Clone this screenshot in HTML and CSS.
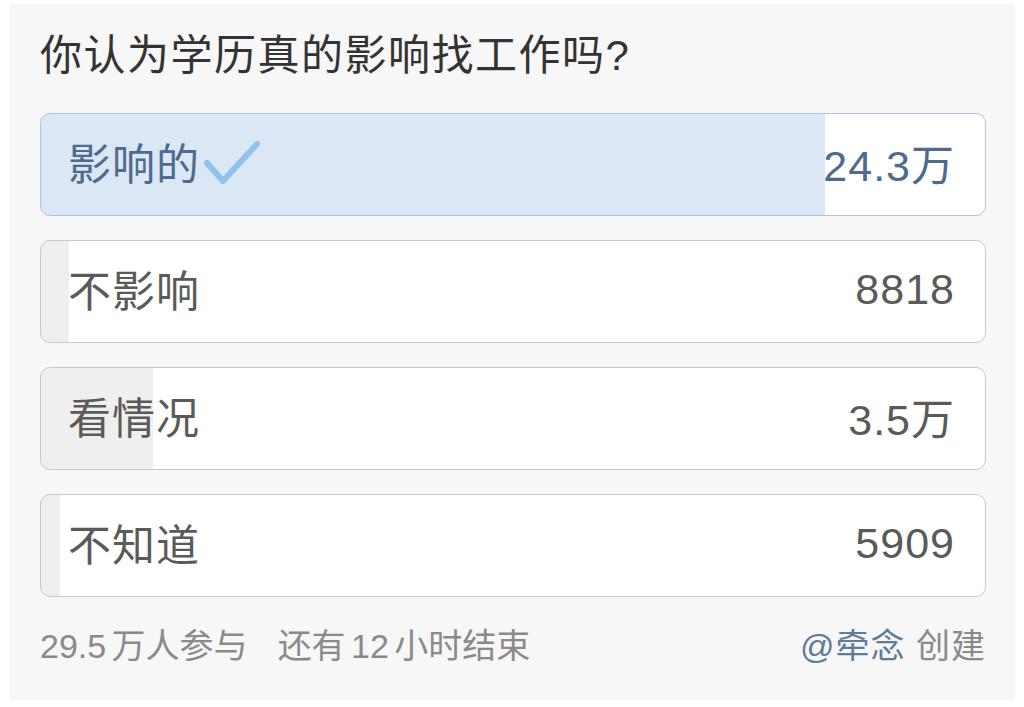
FILE: index.html
```html
<!DOCTYPE html>
<html lang="zh-CN">
<head>
<meta charset="utf-8">
<title>投票</title>
<link rel="stylesheet" href="styles.css">
</head>
<body>
<div class="card">
  <h1 class="title">你认为学历真的影响找工作吗?</h1>
  <div class="options">
    <div class="option selected" style="--p:83%">
      <span class="label">影响的<svg class="check" viewBox="0 0 58 44" width="58" height="44"><path d="M4 22 L20 40 L54 3" fill="none" stroke="#8fc2ef" stroke-width="6" stroke-linecap="round" stroke-linejoin="round"/></svg></span>
      <span class="count">24.3万</span>
    </div>
    <div class="option" style="--p:3%">
      <span class="label">不影响</span>
      <span class="count">8818</span>
    </div>
    <div class="option" style="--p:11.9%">
      <span class="label">看情况</span>
      <span class="count">3.5万</span>
    </div>
    <div class="option" style="--p:2%">
      <span class="label">不知道</span>
      <span class="count">5909</span>
    </div>
  </div>
  <div class="footer">
    <span class="stats">29.5 万人参与<span class="gap"></span>还有 12 小时结束</span>
    <span class="creator"><span class="user">@牵念</span> 创建</span>
  </div>
</div>
</body>
</html>
```

FILE: styles.css
```css
html, body {
  margin: 0;
  padding: 0;
  background: #ffffff;
}
body {
  font-family: "Liberation Sans", "Noto Sans CJK SC", sans-serif;
  padding: 4px 9px 7px 10px;
}
.card {
  background: #f7f7f7;
  height: 696px;
  box-sizing: border-box;
  padding: 25px 29px 0 30px;
  display: flex;
  flex-direction: column;
}
.title {
  margin: 0;
  font-weight: normal;
  font-size: 42px;
  line-height: 54px;
  color: #333333;
  letter-spacing: 1.5px;
}
.options {
  margin-top: 30px;
  display: flex;
  flex-direction: column;
  gap: 24px;
}
.option {
  --bar: #efefef;
  height: 103px;
  box-sizing: border-box;
  border: 1px solid #c9c9c9;
  border-radius: 10px;
  background: linear-gradient(to right, var(--bar) var(--p), #ffffff var(--p));
  display: flex;
  align-items: center;
  justify-content: space-between;
  padding: 0 30px 8px 27px;
  font-size: 43px;
  color: #5a5a5a;
}
.option.selected {
  --bar: #dbe7f4;
  border-color: #aac5e3;
  color: #4d6b8e;
}
.label {
  display: flex;
  align-items: center;
  letter-spacing: 1px;
}
.check {
  margin-left: 3px;
  margin-top: 4px;
}
.count {
  letter-spacing: 1px;
  margin-top: 3px;
}
.footer {
  margin-top: 27px;
  display: flex;
  justify-content: space-between;
  align-items: center;
  font-size: 34px;
  line-height: 44px;
  color: #8a8a8a;
}
.stats {
  word-spacing: -4px;
}
.gap {
  display: inline-block;
  width: 30px;
}
.creator {
  letter-spacing: 1px;
}
.user {
  color: #5f7c9d;
}
```
